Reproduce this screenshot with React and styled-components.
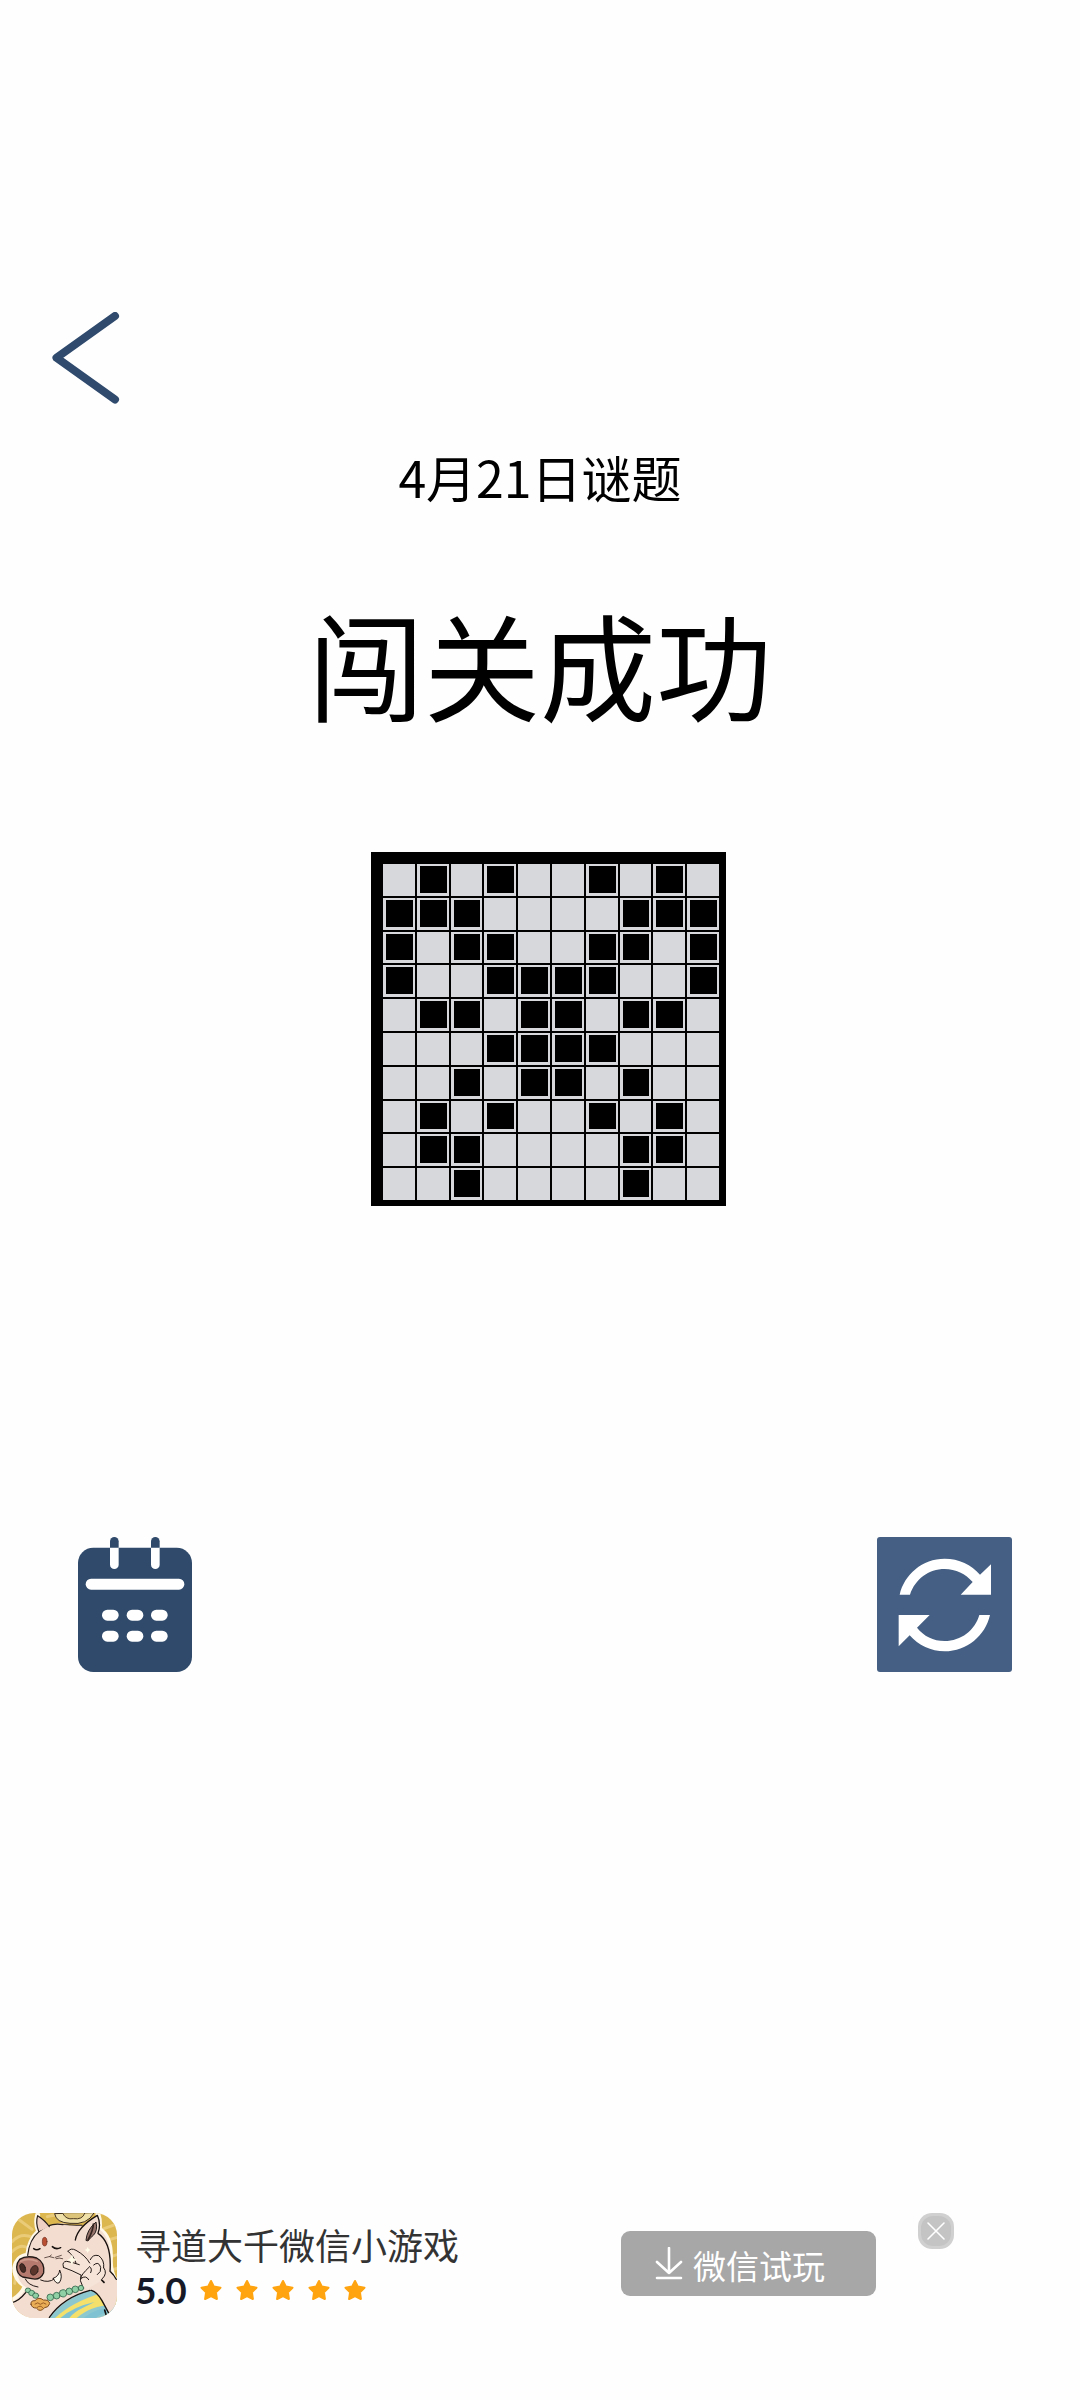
import React from 'react';
import styled, { createGlobalStyle } from 'styled-components';

const GlobalStyle = createGlobalStyle`
  body {
    margin: 0;
    background: #fefefe;
    font-family: 'Noto Sans CJK SC', sans-serif;
  }

  *, *::before, *::after {
    box-sizing: border-box;
  }

  svg {
    display: block;
  }
`;

const Page = styled.div`
  min-height: 100vh;
  display: flex;
  flex-direction: column;
`;

const IconButton = styled.button`
  padding: 0;
  border: none;
  background: transparent;
  cursor: pointer;
`;

const Header = styled.header`
  display: flex;
  padding: 312px 52px 0;
`;

const Main = styled.main`
  display: flex;
  flex-direction: column;
  align-items: center;
`;

const PuzzleDate = styled.p`
  margin: 42px 0 0;
  font-size: 50px;
  line-height: 60px;
  color: #000;
`;

const Title = styled.h1`
  margin: 86px 0 0;
  font-size: 116px;
  line-height: 140px;
  font-weight: 400;
  color: #000;
`;

const Board = styled.div`
  width: 355px;
  margin: 120px 0 0 17px;
  padding: 12px 7px 6px 12px;
  background: #000;
`;

const Cells = styled.div`
  display: grid;
  grid-template-columns: repeat(10, 1fr);
  gap: 2px;
  aspect-ratio: 1;
`;

const Cell = styled.div`
  background: ${({ $filled }) => ($filled ? '#000' : '#d7d8db')};
  border: solid #d7d8db;
  border-width: 2px 2px 3px 3px;
`;

const Actions = styled.nav`
  display: flex;
  justify-content: space-between;
  padding: 0 68px 0 78px;
  margin-top: 331px;
`;

const AdBar = styled.footer`
  display: flex;
  align-items: flex-start;
  margin-top: auto;
  padding: 0 126px 82px 12px;
`;

const AdInfo = styled.div`
  margin-left: 18px;
  padding-top: 8px;
`;

const AdName = styled.p`
  margin: 0;
  font-size: 36px;
  line-height: 46px;
  color: #333;
`;

const Rating = styled.div`
  display: flex;
  align-items: center;
  gap: 13px;
  font-family: Lato, sans-serif;
  font-size: 37px;
  line-height: 46px;
  font-weight: 700;
  color: #171a26;
`;

const Stars = styled.div`
  display: flex;
  gap: 14px;
`;

const TryButton = styled.button`
  display: flex;
  align-items: center;
  gap: 10px;
  width: 255px;
  height: 65px;
  margin: 18px 42px 0 auto;
  padding: 0 0 0 34px;
  border: none;
  border-radius: 9px;
  background: #a7a7a7;
  color: #fff;
  font-family: inherit;
  font-size: 33px;
  line-height: 40px;
  cursor: pointer;
`;

const TryLabel = styled.span`
  padding-top: 2px;
`;

const PUZZLE = [
  '.#.#..#.#.',
  '###....###',
  '#.##..##.#',
  '#..####..#',
  '.##.##.##.',
  '...####...',
  '..#.##.#..',
  '.#.#..#.#.',
  '.##....##.',
  '..#....#..',
];

const BackIcon = () => (
  <svg width="68" height="92" viewBox="0 0 68 92" fill="none" aria-hidden="true">
    <path d="M63 4 L4.5 45.8 L63 87.5" stroke="#2f4a6d" strokeWidth="8" strokeLinecap="round" strokeLinejoin="round" />
  </svg>
);

const CalendarIcon = () => (
  <svg width="114" height="135" viewBox="0 0 342 405" aria-hidden="true">
    <rect x="0" y="32" width="342" height="373" rx="46" fill="#2f4a6b" />
    {[96, 219].map((x) => (
      <g key={x}>
        <rect x={x} y="0" width="26" height="96" rx="13" fill="#fff" />
        <path d={`M${x} 32V13a13 13 0 0 1 26 0v19z`} fill="#2f4a6b" />
      </g>
    ))}
    <rect x="23" y="125" width="296" height="33" rx="16" fill="#fff" />
    {[218, 281].map((y) =>
      [72, 146, 219].map((x) => (
        <rect key={`${x}-${y}`} x={x} y={y} width="50" height="33" rx="16" fill="#fff" />
      ))
    )}
  </svg>
);

const RefreshIcon = () => (
  <svg width="135" height="135" viewBox="0 0 405 405" aria-hidden="true">
    <rect width="405" height="405" rx="9" fill="#445f83" />
    <g fill="#fff">
      <path d="M68 173C82 112 136 65 203 65C246 65 283 83 309 113L342 82V173H251L287 135C266 111 236 96 203 96C155 96 114 127 99 173Z" />
      <path d="M339 234C325 296 270 343 203 343C162 343 124 325 98 295L65 328V234H158L120 272C140 297 169 312 203 312C252 312 294 280 307 234Z" />
    </g>
  </svg>
);

const StarIcon = () => (
  <svg width="22" height="22" viewBox="0 0 22 22" aria-hidden="true">
    <path
      d="M11 2L13.9 7.6L20.5 8.7L15.9 13.2L16.9 20L11 17L5.1 20L6.1 13.2L1.5 8.7L8.1 7.6Z"
      fill="#ffa30f"
      stroke="#ffa30f"
      strokeWidth="2"
      strokeLinejoin="round"
    />
  </svg>
);

const DownloadIcon = () => (
  <svg width="28" height="34" viewBox="0 0 28 34" fill="none" stroke="#fff" strokeWidth="2.6" strokeLinecap="round" strokeLinejoin="round" aria-hidden="true">
    <path d="M14 1V26M2 15L14 26L26 15M2 31H26" />
  </svg>
);

const CloseIcon = () => (
  <svg width="36" height="36" viewBox="0 0 36 36" aria-hidden="true">
    <rect width="36" height="36" rx="14" fill="#d0d0d0" />
    <rect x="3" y="3" width="30" height="30" rx="12" fill="#c4c4c4" />
    <path d="M10 10L26 26M26 10L10 26" stroke="#fff" strokeWidth="1.6" strokeLinecap="round" />
  </svg>
);

const PigIcon = () => (
  <svg width="105" height="105" viewBox="36 39 315 315" role="img" aria-label="寻道大千">
    <defs>
      <clipPath id="pig-frame">
        <rect x="36" y="39" width="315" height="315" rx="66" />
      </clipPath>
    </defs>
    <g clipPath="url(#pig-frame)" strokeLinecap="round" strokeLinejoin="round">
      <rect x="36" y="39" width="315" height="315" fill="#dcb64f" />
      <g fill="none" stroke="#e9cb78" strokeWidth="9">
        <path d="M36 125Q62 96 98 112M36 155Q64 128 86 146M40 215Q50 220 44 250M58 60L96 88M142 50Q170 40 200 50M306 88L351 72M318 122L351 112M332 170L351 164M336 210L351 205" />
      </g>
      {/* lotus behind the head */}
      <path d="M164 42Q168 68 210 70Q262 76 282 39Z" fill="#efe0a8" stroke="#3a2c20" strokeWidth="3" />
      <path d="M188 40Q198 60 220 56Q248 60 254 40" fill="#dcc47b" stroke="#4d3b24" strokeWidth="3" />
      {/* light halo, then head and body */}
      <path d="M113 45Q106 70 116 94Q88 120 83 166Q50 170 44 205Q46 240 76 258Q66 285 36 302V354H351V250Q330 220 331 180Q334 110 298 88Q300 60 294 43" fill="none" stroke="#fff8e8" strokeWidth="15" />
      <path d="M113 47Q104 72 116 96Q88 120 82 170Q48 180 50 216Q56 250 78 262Q72 284 40 304V360H355V250Q330 224 331 182Q334 116 298 88L226 94L200 72Q172 66 148 78Q134 66 113 47Z" fill="#f3ddd1" />
      <path d="M83 166Q88 118 118 94Q150 66 190 74Q212 76 246 76" fill="none" stroke="#241c1a" strokeWidth="3.5" />
      <path d="M190 75Q212 78 246 77L232 106L190 100Z" fill="#f3ddd1" />
      <path d="M116 94Q106 68 113 47Q136 62 148 80" fill="#efd0c4" stroke="#241c1a" strokeWidth="3.5" />
      <path d="M226 120Q232 82 292 46Q304 72 294 100Q336 128 330 214Q342 224 351 242V260H240Z" fill="#f3ddd1" />
      <path d="M226 120Q232 82 292 46Q304 72 294 100Q336 128 330 214Q342 224 351 242" fill="none" stroke="#17110f" strokeWidth="4" />
      <path d="M258 120Q260 90 288 66Q294 92 280 106Q270 114 264 122Z" fill="#96736a" stroke="#241c1a" strokeWidth="3" />
      <path d="M280 72Q280 90 264 120" fill="none" stroke="#33231e" strokeWidth="5" />
      {/* forehead mark and closed eyes */}
      <ellipse cx="134" cy="125" rx="7" ry="13" fill="#b84e32" stroke="#6d2d20" strokeWidth="2" />
      <path d="M101 146Q110 153 120 146M157 140Q168 150 182 143" fill="none" stroke="#17110f" strokeWidth="4.5" />
      <path d="M134 173Q148 166 162 173M168 176Q177 172 188 176M148 170L154 165M166 172L184 166" fill="none" stroke="#4a3731" strokeWidth="2.5" />
      {/* snout */}
      <path d="M59 178Q79 165 110 174Q135 187 131 218Q121 242 95 236L68 231Q50 222 50 201Q51 187 59 178Z" fill="#b57a6d" stroke="#211815" strokeWidth="4" />
      <path d="M62 184Q86 172 111 184" fill="none" stroke="#cf9a8c" strokeWidth="5" />
      <ellipse cx="68" cy="204" rx="8" ry="14" transform="rotate(-18 68 204)" fill="#482a24" stroke="#211815" strokeWidth="2" />
      <ellipse cx="103" cy="211" rx="11" ry="15" transform="rotate(24 103 211)" fill="#5b342c" stroke="#211815" strokeWidth="2" />
      {/* mouth and tusk */}
      <path d="M76 237Q84 256 114 261M122 240Q145 250 163 237" fill="none" stroke="#211815" strokeWidth="3" />
      <path d="M160 235Q178 228 179 210Q189 232 178 248Q168 254 160 235Z" fill="#fffaf0" stroke="#211815" strokeWidth="3" />
      {/* raised hand */}
      <path d="M204 154Q212 142 228 151Q254 164 267 182Q278 160 298 168Q315 182 311 203Q323 220 305 240Q290 278 254 264Q238 252 241 232Q224 222 190 202Q184 188 198 185L228 190Q224 172 204 154Z" fill="#f7e4d8" />
      <path d="M204 154Q212 142 228 151Q256 166 269 189M204 154Q220 165 228 189M190 200Q185 185 200 184Q222 188 238 194M190 202Q216 211 243 225M271 179Q278 162 296 167Q314 180 311 203M281 195Q296 182 302 202Q305 216 292 224M269 200Q278 206 272 218M243 226Q237 243 247 257M268 201Q242 225 242 236Q258 224 266 239M311 203Q324 220 307 236" fill="none" stroke="#211815" strokeWidth="3" />
      <path d="M216 162L220 175L232 180L220 184L216 196L211 184L201 180L211 175ZM263 141L266 147L272 150L266 153L263 159L260 153L254 150L260 147Z" fill="#fffce8" />
      {/* robe */}
      <path d="M148 354Q192 295 266 272Q307 256 351 262V354Z" fill="#8ec8cf" />
      <path d="M165 354Q216 306 305 279L351 286V316Q278 311 230 354Z" fill="#f4e06b" />
      <path d="M181 354Q220 320 284 306L252 322Q222 336 208 354ZM250 354Q292 320 351 322V338Q308 333 288 354Z" fill="#7fc3d2" />
      <path d="M266 265Q294 276 306 300Q320 326 332 354H351V240Q320 230 303 242Q285 252 266 265Z" fill="#f3ddd1" />
      <path d="M148 352Q190 292 270 271M274 271Q292 276 306 302M36 308Q58 302 77 278M306 302L332 350" fill="none" stroke="#17110f" strokeWidth="4" />
      <path d="M305 240L312 247M314 330L320 350" fill="none" stroke="#17110f" strokeWidth="5" />
      {/* beads and pendant */}
      <g fill="#8fd0a5" stroke="#35684d" strokeWidth="2.5">
        <ellipse cx="84" cy="271" rx="8" ry="7" />
        <ellipse cx="95" cy="279" rx="9" ry="8" />
        <ellipse cx="107" cy="287" rx="9" ry="8" />
        <circle cx="151" cy="292" r="10" />
        <circle cx="170" cy="287" r="10" />
        <circle cx="189" cy="280" r="11" />
        <circle cx="208" cy="274" r="10" />
        <circle cx="226" cy="268" r="10" />
        <circle cx="243" cy="264" r="8" />
      </g>
      <path d="M93 313Q91 301 105 302Q116 289 130 300Q148 299 149 311Q145 323 134 323Q120 339 109 324Q96 325 93 313Z" fill="#e9ad55" stroke="#7f4e22" strokeWidth="3" />
      <path d="M105 312Q114 304 121 313Q130 304 138 312M112 322Q121 314 128 323" fill="none" stroke="#985d28" strokeWidth="3" />
    </g>
  </svg>
);

const App = () => {
  return (
    <>
      <GlobalStyle />
      <Page>
        <Header>
          <IconButton type="button" aria-label="返回">
            <BackIcon />
          </IconButton>
        </Header>

        <Main>
          <PuzzleDate>4月21日谜题</PuzzleDate>
          <Title>闯关成功</Title>
          <Board>
            <Cells>
              {PUZZLE.join('').split('').map((cell, i) => (
                <Cell key={i} $filled={cell === '#'} />
              ))}
            </Cells>
          </Board>
        </Main>

        <Actions>
          <IconButton type="button" aria-label="日历">
            <CalendarIcon />
          </IconButton>
          <IconButton type="button" aria-label="重玩">
            <RefreshIcon />
          </IconButton>
        </Actions>

        <AdBar>
          <PigIcon />
          <AdInfo>
            <AdName>寻道大千微信小游戏</AdName>
            <Rating>
              5.0
              <Stars>
                {[1, 2, 3, 4, 5].map((n) => (
                  <StarIcon key={n} />
                ))}
              </Stars>
            </Rating>
          </AdInfo>
          <TryButton type="button">
            <DownloadIcon />
            <TryLabel>微信试玩</TryLabel>
          </TryButton>
          <IconButton type="button" aria-label="关闭">
            <CloseIcon />
          </IconButton>
        </AdBar>
      </Page>
    </>
  );
};

export default App;
